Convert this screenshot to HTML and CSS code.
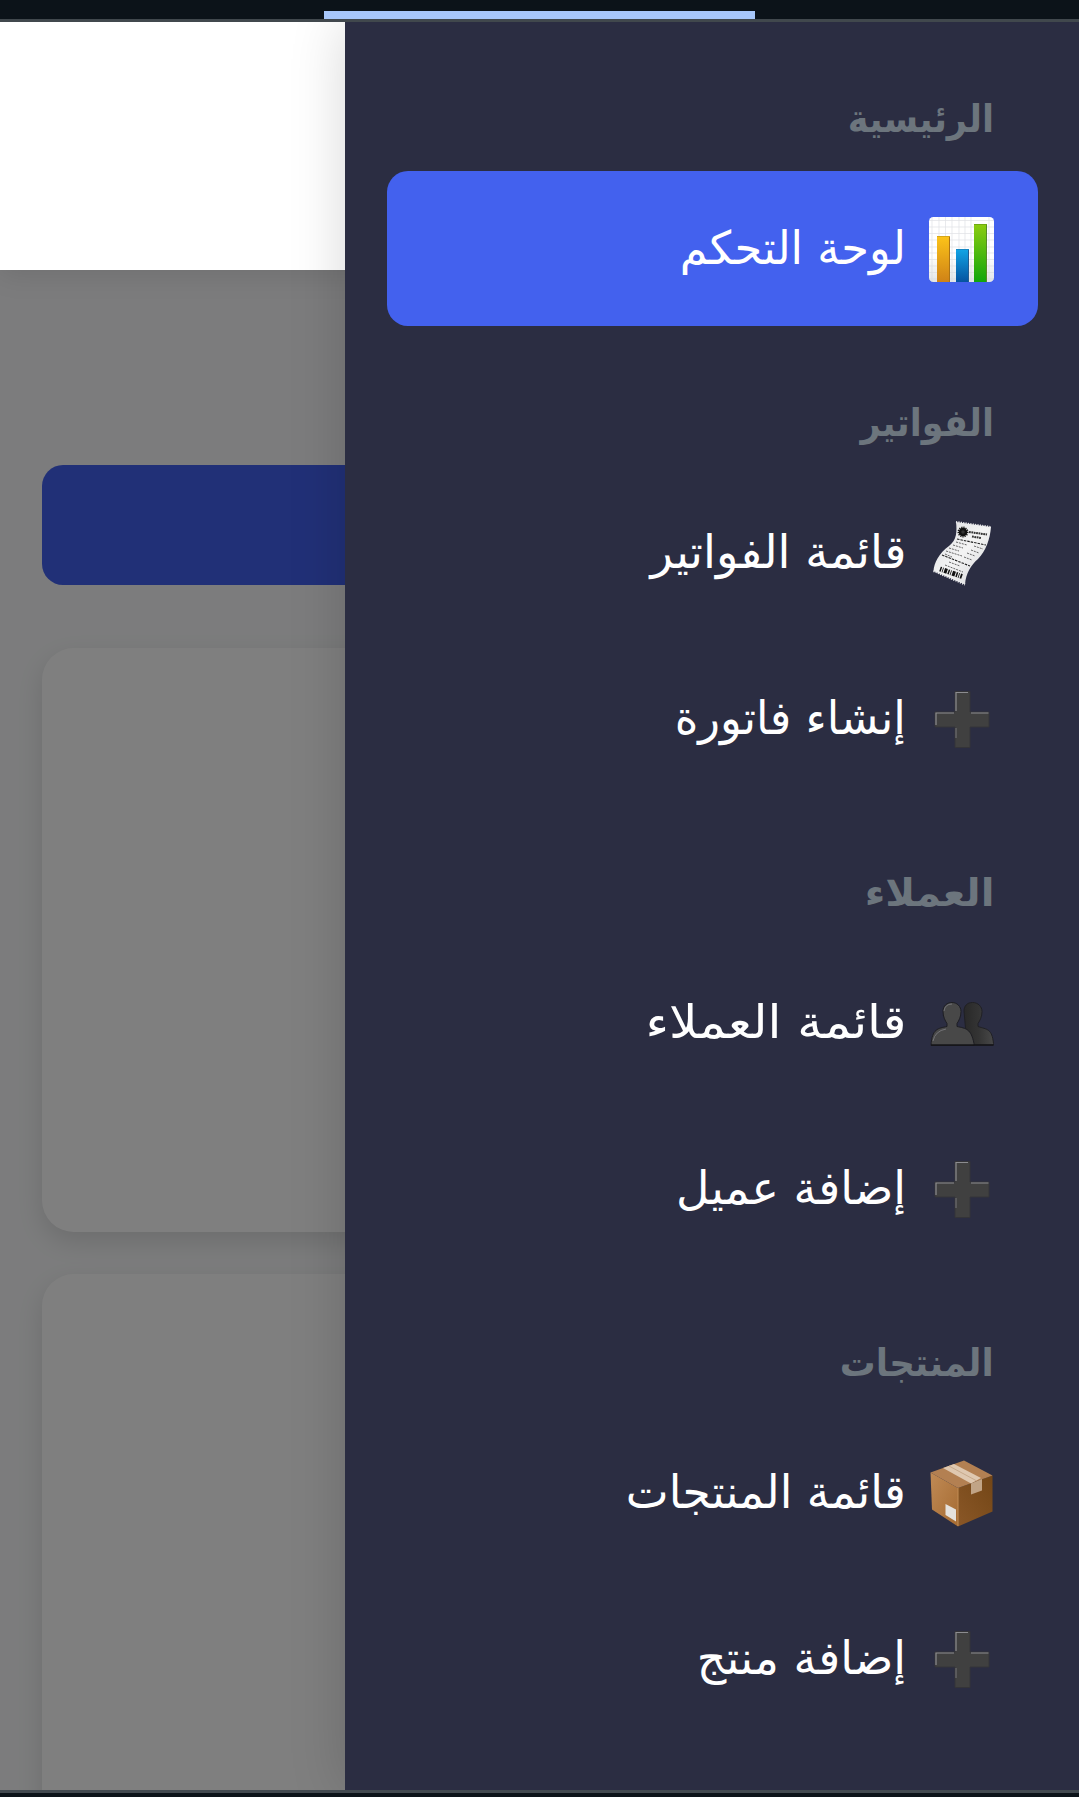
FILE: index.html
```html
<!DOCTYPE html>
<html lang="ar" dir="rtl">
<head>
<meta charset="utf-8">
<title>لوحة التحكم</title>
<link rel="stylesheet" href="styles.css">
</head>
<body>
<svg class="sprite" width="0" height="0" aria-hidden="true">
  <defs>
    <linearGradient id="paper" x1="0" y1="0" x2="0" y2="1"><stop offset="0" stop-color="#fff"/><stop offset=".6" stop-color="#fff"/><stop offset="1" stop-color="#e2e5e8"/></linearGradient>
    <linearGradient id="amber" x1="0" y1="0" x2="0" y2="1"><stop offset="0" stop-color="#fcc419"/><stop offset="1" stop-color="#cf8217"/></linearGradient>
    <linearGradient id="azure" x1="0" y1="0" x2="0" y2="1"><stop offset="0" stop-color="#12a5e6"/><stop offset="1" stop-color="#0553a0"/></linearGradient>
    <linearGradient id="leaf" x1="0" y1="0" x2="0" y2="1"><stop offset="0" stop-color="#8ccc10"/><stop offset="1" stop-color="#10a60c"/></linearGradient>
    <linearGradient id="receipt" x1="0" y1="0" x2="1" y2="1"><stop offset="0" stop-color="#d9dadd"/><stop offset=".5" stop-color="#f4f4f4"/><stop offset="1" stop-color="#d2d3d6"/></linearGradient>
    <linearGradient id="boxLeft" x1="0" y1="0" x2="1" y2="1"><stop offset="0" stop-color="#c08a55"/><stop offset="1" stop-color="#a56b32"/></linearGradient>
    <linearGradient id="boxRight" x1="0" y1="1" x2="1" y2="0"><stop offset="0" stop-color="#8a5727"/><stop offset="1" stop-color="#734616"/></linearGradient>
    <linearGradient id="backPerson" x1="0" y1="0" x2="1" y2="0"><stop offset="0" stop-color="#282828"/><stop offset=".5" stop-color="#343434"/><stop offset="1" stop-color="#484848"/></linearGradient>
    <symbol id="plus" viewBox="0 0 65 65">
      <path d="M26 4.500h15v20.500h19v15h-19v20.500h-15v-20.500h-20v-15h20z" fill="#404040" stroke="#343438"/>
      <path d="M27 24V5.500h12M7 38V26h18M42 26h17.500" fill="none" stroke="#8c8c90" stroke-width="1.200"/>
      <path d="M27 41v10" fill="none" stroke="#77777a"/>
    </symbol>
  </defs>
</svg>
<div class="handle-bar"><div class="handle"></div></div>
<div class="viewport">
  <header class="topbar"></header>
  <main class="page">
    <div class="button"></div>
    <div class="card"></div>
    <div class="card"></div>
  </main>
  <div class="overlay"></div>
  <nav class="sidebar">
    <section class="group">
      <h2 class="title"><span class="text w-home">الرئيسية</span></h2>
      <a class="item active">
        <svg class="icon" viewBox="0 0 65 65"><rect x="0" y="0" width="65" height="65" rx="4.500" fill="url(#paper)"/><path d="M3 0v65M10 0v65M16.500 0v65M23 0v65M30 0v65M36 0v65M42 0v65M60 0v65M0 3.500h65M0 10h65M0 16.500h65M0 23h65M0 30h65M0 36h65M0 42.500h65M0 49h65M0 55.500h65M0 62h65" stroke="#d5d9dc" stroke-width=".7" opacity=".75"/><path d="M8 19h13v46H8z" fill="url(#amber)"/><path d="M27 32h13v33H27z" fill="url(#azure)"/><path d="M45 7h13v58H45z" fill="url(#leaf)"/><path d="M20.500 20v45" stroke="#aa7417"/><path d="M39.500 33v32" stroke="#235c91"/><path d="M57.500 8v57" stroke="#558b25"/><path d="M8 19.500h13" stroke="#d6a719"/><path d="M27 32.500h13" stroke="#1688c4"/><path d="M45 7.500h13" stroke="#70a913"/></svg>
        <span class="text w-dashboard">لوحة التحكم</span>
      </a>
    </section>
    <section class="group">
      <h2 class="title"><span class="text w-invoices">الفواتير</span></h2>
      <a class="item">
        <svg class="icon" viewBox="0 0 65 65"><path d="M27 1C28 10 28 19 20 25C10 32 5 42 4.500 50L36 63.500C37 52 42 44 49 38C57 30 61 18 62 6z" fill="url(#receipt)"/><path d="M27 1L62 6M4.500 50L36 63.500" stroke="#ececee" stroke-width="2" stroke-dasharray="1.200 1.200"/><circle cx="34" cy="11" r="3" fill="#333" stroke="#111" stroke-width="2.500"/><circle cx="34" cy="11" r="4.700" fill="none" stroke="#111" stroke-width="1.500" stroke-dasharray="1.200 1"/><path d="M40 11l18 2.500M43 15.500l9 1.500" stroke="#333" stroke-width="2" stroke-dasharray="1.800 .6"/><path d="M28 18l29 6M13 34l28 11" stroke="#222" stroke-width="1.100" stroke-dasharray="2.500 1"/><path d="M27 21l11 3M24 24l10 3M20 27l10 3M17 30l16 5M16 33l7 3M45 25l9 3M42 29l8 3M38 32l8 3M35 36l8 3M20 41l11 4M16 44l18 7" stroke="#666" stroke-width="1" stroke-dasharray="2 1"/><path d="M11 48l22 7.500" stroke="#111" stroke-width="5" stroke-dasharray="1.500 1 .8 1.200 3 1"/></svg>
        <span class="text w-invoice-list">قائمة الفواتير</span>
      </a>
      <a class="item">
        <svg class="icon"><use href="#plus"/></svg>
        <span class="text w-invoice-new">إنشاء فاتورة</span>
      </a>
    </section>
    <section class="group">
      <h2 class="title"><span class="text w-clients">العملاء</span></h2>
      <a class="item">
        <svg class="icon" viewBox="0 0 65 65"><path d="M35 20c0-5 3-8.500 8.500-8.500s9.500 4 9.500 9c0 5-2 9-4 12v3c9 3 14 2 15.500 17v1.500H38z" fill="url(#backPerson)" stroke="#202024"/><path d="M14 20c0-5 4-8.500 9-8.500s9 4 9 9c0 5-2 9-4 12v3c9 2 14 2 17 17v2H2c1-17 7-17 16-19v-3c-2-3-4-7-4-12z" fill="#484848" stroke="#1d1d22"/><path d="M2 54h62.500" stroke="#141419" stroke-width="1.500"/><path d="M15 20q1-7 8-7M4 50q2-10 13-12" fill="none" stroke="#737377"/></svg>
        <span class="text w-client-list">قائمة العملاء</span>
      </a>
      <a class="item">
        <svg class="icon"><use href="#plus"/></svg>
        <span class="text">إضافة عميل</span>
      </a>
    </section>
    <section class="group">
      <h2 class="title"><span class="text w-products">المنتجات</span></h2>
      <a class="item">
        <svg class="icon" viewBox="0 0 65 65"><path d="M1.500 11.500L29 27v38.500L3 48.500z" fill="url(#boxLeft)"/><path d="M29 27L63.500 14.500v36L29 65.500z" fill="url(#boxRight)"/><path d="M1.500 11.500L35-.5 63.500 14.500 29 27z" fill="#b38052"/><path d="M14 7l11-4 27 14-10 5.500z" fill="#dfc8b0"/><path d="M20 5l27 14.500" stroke="#c7aa8c"/><path d="M42 22.500L53 18v11.500l-11 4z" fill="#c1a486"/><path d="M16.500 43l10.500 5.500v12L16.500 54z" fill="#e5e2dd"/><path d="M29 27v38" stroke="#c28d55"/></svg>
        <span class="text w-product-list">قائمة المنتجات</span>
      </a>
      <a class="item">
        <svg class="icon"><use href="#plus"/></svg>
        <span class="text">إضافة منتج</span>
      </a>
    </section>
  </nav>
</div>
<div class="bottom-bar"></div>
</body>
</html>
```
FILE: styles.css
```css
* { box-sizing: border-box; }
body { margin: 0; height: 1797px; display: flex; flex-direction: column; overflow: hidden; background: #0c1319; font-family: "DejaVu Sans", sans-serif; }
.sprite { position: absolute; }
.handle-bar { height: 22px; flex: none; display: flex; justify-content: center; padding-top: 11px; border-bottom: 3px solid #41484d; }
.handle { width: 431px; height: 8px; background: #a8c7fa; }
.viewport { position: relative; height: 1768px; flex: none; overflow: hidden; background: #f8f9fa; }
.topbar { position: relative; z-index: 2; height: 248px; background: #fff; box-shadow: 0 5px 26px rgba(0, 0, 0, .1); }
.page { display: flex; flex-direction: column; padding: 195px 42px 0; }
.button { height: 120px; border-radius: 21px; background: #4361ee; margin-bottom: 63px; }
.card { height: 584px; border-radius: 32px; background: #fff; margin-bottom: 42px; box-shadow: 0 10px 26px rgba(0, 0, 0, .12); flex: none; }
.overlay { position: absolute; inset: 0; z-index: 1; background: rgba(0, 0, 0, .5); }
.sidebar { position: absolute; z-index: 3; top: 0; right: 0; bottom: 0; width: 734px; padding: 56px 41px 0 42px; background: #2b2d42; box-shadow: 0 0 53px rgba(0, 0, 0, .16); }
.group { display: flex; flex-direction: column; gap: 11px; margin-bottom: 56px; }
.title { margin: 0 0 -11px; height: 93px; padding: 11px 44px 0 0; line-height: 60px; font-size: 38px; font-weight: 700; color: #6c757d; }
.item { display: flex; align-items: center; gap: 23px; height: 155px; padding: 2px 44px 0 0; border-radius: 21px; color: #fff; font-size: 46px; line-height: 66px; white-space: nowrap; }
.active { background: #4361ee; }
.icon { width: 65px; height: 65px; flex: none; overflow: visible; }
.text { display: inline-block; transform-origin: right center; }
.item .text { padding-bottom: 4px; }
/* Horizontal fit of each label */
.w-home { transform: scaleX(.925); }
.w-invoices { transform: scaleX(.92); }
.w-clients { transform: scaleX(1.06); }
.w-products { transform: scaleX(.94); }
.w-dashboard { transform: scaleX(.975); }
.w-invoice-list { transform: scaleX(1.01); }
.w-invoice-new { transform: scaleX(.98); }
.w-client-list { transform: scaleX(1.09); }
.w-product-list { transform: scaleX(.99); }
.bottom-bar { height: 7px; border-top: 3px solid #434a50; }
```
